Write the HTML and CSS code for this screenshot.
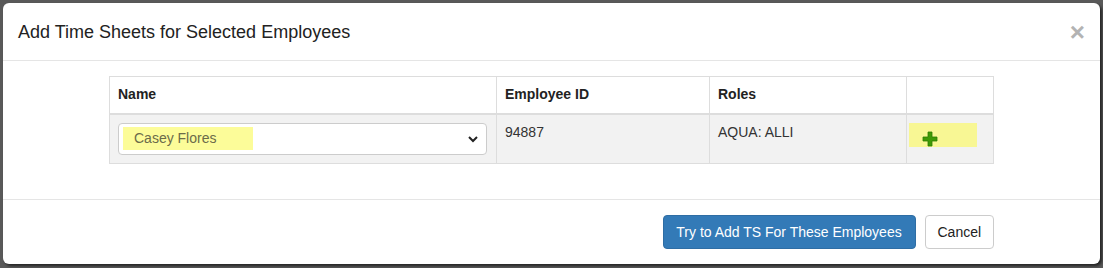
FILE: index.html
```html
<!DOCTYPE html>
<html lang="en">
<head>
  <meta charset="UTF-8" />
  <title>Add Time Sheets</title>
  <link rel="stylesheet" href="styles.css">
</head>
<body>
  <div class="modal">
    <div class="modal-header">
      <h4 class="modal-title">Add Time Sheets for Selected Employees</h4>
      <button class="close" type="button">&times;</button>
    </div>
    <div class="modal-body">
      <table class="emp-table">
        <colgroup>
          <col class="c-name"><col class="c-id"><col class="c-roles"><col class="c-add">
        </colgroup>
        <thead>
          <tr>
            <th>Name</th>
            <th>Employee ID</th>
            <th>Roles</th>
            <th></th>
          </tr>
        </thead>
        <tbody>
          <tr>
            <td>
              <div class="select-wrap">
                <div class="form-select"><span class="mark">Casey Flores</span></div>
                <svg class="chevron" width="10" height="8" viewBox="0 0 10 8"><path d="M1 2 L5 6 L9 2" fill="none" stroke="#222" stroke-width="2"/></svg>
              </div>
            </td>
            <td>94887</td>
            <td>AQUA: ALLI</td>
            <td>
              <div class="add-mark">
                <svg width="16" height="16" viewBox="0 0 16 16">
                  <path d="M6 1 H10 V6 H15 V10 H10 V15 H6 V10 H1 V6 H6 Z" fill="#3f9a06" stroke="#2f7d02" stroke-width="0.8"/>
                </svg>
              </div>
            </td>
          </tr>
        </tbody>
      </table>
    </div>
    <div class="modal-footer">
      <div class="footer-inner">
        <button class="btn btn-primary" type="button">Try to Add TS For These Employees</button>
        <button class="btn btn-default" type="button">Cancel</button>
      </div>
    </div>
  </div>
</body>
</html>
```

FILE: styles.css
```css
* { box-sizing: border-box; }
body {
  margin: 0;
  padding: 3px 3px 4px 3px;
  background: #595959;
  font-family: "Liberation Sans", Arial, sans-serif;
  font-size: 14px;
  line-height: 1.42857;
  color: #333;
}
.modal {
  width: 1097px;
  background: #fff;
  border-radius: 6px;
  box-shadow: 2px 2px 3px rgba(0, 0, 0, 0.6);
}
.modal-header {
  display: flex;
  align-items: center;
  justify-content: space-between;
  padding: 16px 15px 15px;
  border-bottom: 1px solid #e5e5e5;
}
.modal-title {
  margin: 0;
  font-size: 18px;
  font-weight: normal;
  line-height: 26px;
  color: #222;
}
.close {
  border: none;
  background: none;
  padding: 0;
  margin-right: 0;
  font-family: "Liberation Sans", Arial, sans-serif;
  font-size: 26px;
  font-weight: bold;
  line-height: 1;
  color: #b3b3b3;
}
.modal-body {
  padding: 15px;
}
.emp-table {
  width: 884px;
  margin: 0 auto 20px;
  border-collapse: collapse;
  table-layout: fixed;
}
.c-name { width: 387px; }
.c-id { width: 213px; }
.c-roles { width: 197px; }
.c-add { width: 87px; }
.emp-table th,
.emp-table td {
  border: 1px solid #ddd;
  padding: 8px;
  text-align: left;
  vertical-align: top;
}
.emp-table th {
  font-weight: bold;
  color: #222;
  border-bottom-width: 2px;
}
.emp-table tbody tr {
  background: #f2f2f2;
}
.select-wrap {
  position: relative;
  width: 369px;
}
.form-select {
  height: 32px;
  padding: 3px 4px;
  background: #fff;
  border: 1px solid #ccc;
  border-radius: 4px;
}
.mark {
  display: inline-block;
  width: 130px;
  height: 23px;
  padding: 2px 0 0 11px;
  background: #fcfc99;
  color: #6b6b4a;
}
.chevron {
  position: absolute;
  right: 9px;
  top: 12px;
}
.add-mark {
  width: 68px;
  height: 24px;
  margin-left: -6px;
  background: #f8f794;
  padding: 8px 0 0 13px;
}
.add-mark svg {
  display: block;
}
.modal-footer {
  padding: 15px;
  border-top: 1px solid #e5e5e5;
}
.footer-inner {
  width: 884px;
  margin: 0 auto;
  display: flex;
  justify-content: flex-end;
  gap: 9px;
}
.btn {
  height: 34px;
  padding: 6px 12px;
  font-family: "Liberation Sans", Arial, sans-serif;
  font-size: 14px;
  line-height: 20px;
  border-radius: 4px;
  border: 1px solid transparent;
}
.btn-primary {
  width: 253px;
  background: #337ab7;
  border-color: #2e6da4;
  color: #fff;
}
.btn-default {
  width: 69px;
  background: #fff;
  border-color: #ccc;
  color: #222;
}
```
